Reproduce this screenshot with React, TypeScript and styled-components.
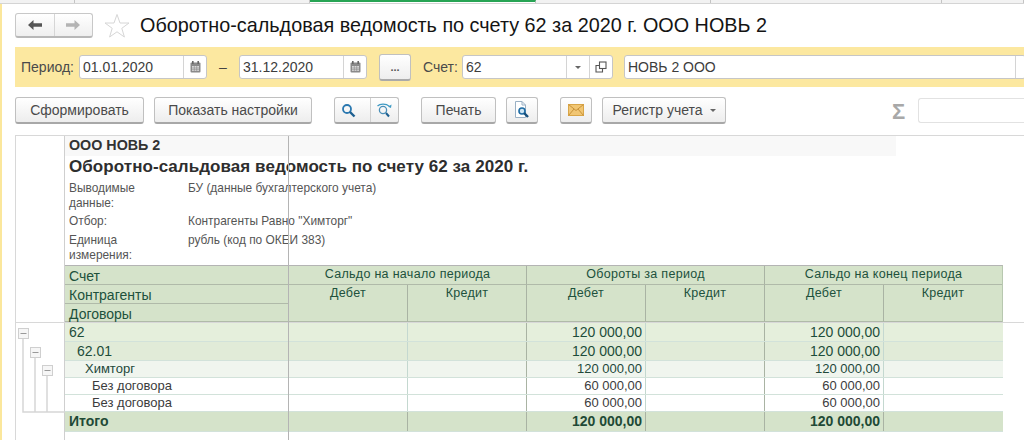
import React from "react";
import styled, { createGlobalStyle } from "styled-components";

const GlobalStyle = createGlobalStyle`
  html, body {
    margin: 0;
    padding: 0;
    height: 440px;
    overflow: hidden;
    background: #fff;
    font-family: "Liberation Sans", Arial, sans-serif;
  }
`;

const Page = styled.div`
  width: 1024px;
  height: 440px;
  overflow: hidden;
  display: flex;
  flex-direction: column;
`;

const TopStrip = styled.div`
  height: 4px;
  display: flex;
  background: #f2f2f2;
  border-bottom: 1px solid #d4d4d4;
  box-sizing: border-box;
`;

const StripCell = styled.div<{ $w: number; $active?: boolean }>`
  width: ${(p) => p.$w}px;
  flex: none;
  box-sizing: border-box;
  border-right: 1px solid #c4c4c4;
  border-top: ${(p) => (p.$active ? "2px solid #27a454" : "none")};
  background: ${(p) => (p.$active ? "#fff" : "transparent")};
`;

const Body = styled.div`
  flex: 1;
  min-height: 0;
  border-left: 2px solid #fbe79c;
  padding: 9px 0 0 13px;
  display: flex;
  flex-direction: column;
`;

const TitleRow = styled.div`
  height: 25px;
  display: flex;
  align-items: center;
`;

const NavGroup = styled.div`
  width: 78px;
  height: 25px;
  box-sizing: border-box;
  display: flex;
  border: 1px solid #c8c8c8;
  border-bottom: 2px solid #b8b8b8;
  border-radius: 3px;
  background: linear-gradient(#fff, #efefef);
`;

const NavCell = styled.div`
  flex: 1;
  display: flex;
  align-items: center;
  justify-content: center;
  & + & {
    border-left: 1px solid #d6d6d6;
  }
`;

const StarBox = styled.div`
  margin-left: 11px;
  width: 26px;
  display: flex;
  justify-content: center;
`;

const Title = styled.div`
  margin-left: 10px;
  font-size: 19.8px;
  line-height: 25px;
  color: #141414;
  white-space: nowrap;
`;

const FilterBar = styled.div`
  margin-top: 9px;
  height: 40px;
  box-sizing: border-box;
  background: #fce8a0;
  display: flex;
  align-items: center;
  padding-left: 6px;
  font-size: 14px;
  color: #4a4a4a;
`;

const FieldLabel = styled.span<{ $w: number; $ml?: number }>`
  width: ${(p) => p.$w}px;
  margin-left: ${(p) => p.$ml ?? 0}px;
  flex: none;
  white-space: nowrap;
`;

const Field = styled.div<{ $w: number; $ml?: number }>`
  width: ${(p) => p.$w}px;
  margin-left: ${(p) => p.$ml ?? 0}px;
  height: 24px;
  flex: none;
  box-sizing: border-box;
  display: flex;
  background: #fff;
  border: 1px solid #c6c6c6;
  border-radius: 3px;
`;

const FieldValue = styled.div`
  flex: 1;
  padding-left: 3px;
  line-height: 23px;
  font-size: 14px;
  color: #3c3c3c;
  white-space: nowrap;
  overflow: hidden;
`;

const FieldBtn = styled.div<{ $w: number }>`
  width: ${(p) => p.$w}px;
  flex: none;
  display: flex;
  align-items: center;
  justify-content: center;
  border-left: 1px solid #d4d4d4;
`;

const Dash = styled.span`
  width: 32px;
  flex: none;
  text-align: center;
  color: #444;
`;

const DotsButton = styled.div`
  width: 32px;
  height: 27px;
  margin-left: 12px;
  flex: none;
  box-sizing: border-box;
  display: flex;
  align-items: center;
  justify-content: center;
  border: 1px solid #c0c0c0;
  border-bottom: 2px solid #aaa;
  border-radius: 3px;
  background: linear-gradient(#fff, #eee);
  font-weight: bold;
  font-size: 11px;
  color: #555;
`;

const ActionRow = styled.div`
  margin-top: 10px;
  height: 27px;
  display: flex;
  align-items: flex-start;
`;

const Button = styled.div<{ $w: number; $ml?: number }>`
  width: ${(p) => p.$w}px;
  margin-left: ${(p) => p.$ml ?? 0}px;
  height: 27px;
  flex: none;
  box-sizing: border-box;
  display: flex;
  align-items: center;
  justify-content: center;
  gap: 7px;
  border: 1px solid #c0c0c0;
  border-bottom: 2px solid #a8a8a8;
  border-radius: 3px;
  background: linear-gradient(#fff, #ededed);
  font-size: 14px;
  color: #4a4a4a;
  white-space: nowrap;
`;

const ButtonPart = styled.div`
  flex: 1;
  align-self: stretch;
  display: flex;
  align-items: center;
  justify-content: center;
  & + & {
    border-left: 1px solid #d0d0d0;
  }
`;

const Caret = styled.span`
  width: 0;
  height: 0;
  border-left: 3px solid transparent;
  border-right: 3px solid transparent;
  border-top: 3px solid #666;
`;

const Sigma = styled.div`
  margin-left: 166px;
  width: 26px;
  font-size: 22px;
  font-weight: bold;
  line-height: 29px;
  color: #a8a8a8;
`;

const SearchBox = styled.div`
  flex: 1;
  height: 25px;
  margin-top: 1px;
  box-sizing: border-box;
  border: 1px solid #e2e2e2;
  border-right: none;
  border-radius: 3px 0 0 3px;
`;

const ReportArea = styled.div`
  margin-top: 11px;
  flex: 1;
  min-height: 0;
  display: flex;
  border-top: 1px solid #d8d8d8;
  border-left: 1px solid #d8d8d8;
`;

const Gutter = styled.div`
  width: 49px;
  flex: none;
  border-right: 1px solid #cfcfcf;
  box-sizing: border-box;
  position: relative;
`;

const Sheet = styled.div`
  flex: 1;
  min-width: 0;
  position: relative;
`;

const ColumnLine = styled.div`
  position: absolute;
  left: 223px;
  top: 0;
  bottom: 0;
  width: 1px;
  background: #b4b4b4;
  z-index: 2;
`;

const CompanyRow = styled.div`
  width: 831px;
  height: 20px;
  padding-left: 4px;
  box-sizing: border-box;
  background: #f8f8f8;
  font-size: 14.3px;
  font-weight: bold;
  line-height: 19px;
  color: #333;
`;

const ReportTitle = styled.div`
  height: 25px;
  padding-left: 4px;
  font-size: 17px;
  font-weight: bold;
  line-height: 22px;
  letter-spacing: 0.06px;
  color: #2e2e2e;
  white-space: nowrap;
`;

const MetaRow = styled.div<{ $h: number }>`
  height: ${(p) => p.$h}px;
  display: flex;
  padding-left: 4px;
  font-size: 11.9px;
  line-height: 15px;
  color: #555;
`;

const MetaLabel = styled.div`
  width: 119px;
  flex: none;
  box-sizing: border-box;
  padding-right: 30px;
`;

const MetaValue = styled.div`
  white-space: nowrap;
`;

const ReportGrid = styled.div`
  width: 938px;
  display: grid;
  grid-template-columns: 223px repeat(6, 119px);
  grid-template-rows: 19px 19px 18px;
  font-size: 12.5px;
  color: #20513c;
  border-top: 1px solid #b4b4b4;
  border-right: 1px solid #b8c8b0;
  box-sizing: border-box;
`;

const HeadCell = styled.div<{ $span?: number; $rows?: number; $left?: boolean }>`
  grid-column: span ${(p) => p.$span ?? 1};
  grid-row: span ${(p) => p.$rows ?? 1};
  background: #d5e3ca;
  box-sizing: border-box;
  border-left: 1px solid #a9b3a3;
  border-bottom: 1px solid #b0baa9;
  text-align: center;
  line-height: 17px;
  letter-spacing: 0.3px;
  white-space: nowrap;
  ${(p) =>
    p.$left &&
    `
    text-align: left;
    border-left: none;
    padding-left: 4px;
    font-size: 14px;
    line-height: 20px;
    letter-spacing: 0;
  `}
`;

const DataRow = styled.div<{ $h: number; $bg: string; $size: number; $bold?: boolean; $ink: string }>`
  width: 938px;
  height: ${(p) => p.$h}px;
  box-sizing: border-box;
  display: grid;
  grid-template-columns: 223px repeat(6, 119px);
  background: ${(p) => p.$bg};
  border-bottom: 1px solid #d2e2da;
  font-size: ${(p) => p.$size}px;
  font-weight: ${(p) => (p.$bold ? "bold" : "normal")};
  color: ${(p) => p.$ink};
  line-height: ${(p) => p.$h - 1}px;
`;

const NameCell = styled.div<{ $indent: number }>`
  padding-left: ${(p) => p.$indent}px;
  white-space: nowrap;
`;

const NumCell = styled.div<{ $strong?: boolean }>`
  box-sizing: border-box;
  padding-right: 3px;
  text-align: right;
  border-left: 1px solid ${(p) => (p.$strong ? "#a9b3a3" : "#c4d8d0")};
  white-space: nowrap;
`;

const DataDivider = styled.div`
  height: 1px;
  background: #d8d8d8;
  margin-left: -50px;
  width: 1009px;
`;

const TreeSvg = styled.svg`
  position: absolute;
  left: 0;
  top: 187px;
`;

const BackArrow = () => (
  <svg width="16" height="12" viewBox="0 0 16 12">
    <path d="M1 6 L6.5 1 V4.3 H15 V7.7 H6.5 V11 Z" fill="#555" />
  </svg>
);

const ForwardArrow = () => (
  <svg width="16" height="12" viewBox="0 0 16 12">
    <path d="M15 6 L9.5 1 V4.3 H1 V7.7 H9.5 V11 Z" fill="#b4b4b4" />
  </svg>
);

const Star = () => (
  <svg width="26" height="26" viewBox="0 0 26 26">
    <path
      d="M13 1.5 L16 10 H25 L17.8 15.3 L20.4 24 L13 18.8 L5.6 24 L8.2 15.3 L1 10 H10 Z"
      fill="#fff"
      stroke="#d6d6d6"
      strokeWidth="1"
    />
  </svg>
);

const CalendarIcon = () => (
  <svg width="11" height="12" viewBox="0 0 11 12">
    <rect x="0.5" y="1.5" width="10" height="10" rx="1" fill="#8a8a8a" />
    <rect x="2" y="0" width="1.6" height="3" fill="#666" />
    <rect x="7.4" y="0" width="1.6" height="3" fill="#666" />
    <rect x="2" y="5" width="7" height="5" fill="#d8d8d8" />
    <path d="M2 7 H9 M2 8.7 H9 M4.3 5 V10 M6.7 5 V10" stroke="#888" strokeWidth="0.6" />
  </svg>
);

const CopyIcon = () => (
  <svg width="12" height="12" viewBox="0 0 12 12" fill="none" stroke="#555" strokeWidth="1.1">
    <rect x="4.5" y="1" width="6.5" height="6.5" />
    <path d="M4.5 4.5 H1 V11 H7.5 V7.5" />
  </svg>
);

const SearchIcon = () => (
  <svg width="15" height="15" viewBox="0 0 15 15" fill="none">
    <circle cx="6" cy="6" r="4" stroke="#2a78b0" strokeWidth="1.8" />
    <path d="M9 9 L13.5 13.5" stroke="#1d5f90" strokeWidth="2.4" />
  </svg>
);

const SearchAgainIcon = () => (
  <svg width="17" height="15" viewBox="0 0 17 15" fill="none">
    <circle cx="7" cy="7" r="3.6" stroke="#4a8fb8" strokeWidth="1.3" />
    <path d="M10 10 L13 13.5" stroke="#1d5f90" strokeWidth="2" />
    <path d="M1.5 3 C4 0.6 10 0.4 13.5 3.4" stroke="#3d9ac4" strokeWidth="1.2" />
    <path d="M15.5 1.5 L15 5 L12 3.8 Z" fill="#3d9ac4" />
  </svg>
);

const PreviewIcon = () => (
  <svg width="16" height="18" viewBox="0 0 16 18" fill="none">
    <path d="M1.5 0.5 H8 L11.5 4 V16.5 H1.5 Z" fill="#fff" stroke="#9ab0c4" />
    <path d="M8 0.5 V4 H11.5" stroke="#9ab0c4" />
    <circle cx="8" cy="10" r="3" fill="#cfe6f4" stroke="#1f6ca4" strokeWidth="1.6" />
    <path d="M10.2 12.2 L14 16" stroke="#164f7c" strokeWidth="2.4" />
  </svg>
);

const MailIcon = () => (
  <svg width="16" height="12" viewBox="0 0 16 12">
    <rect x="0.5" y="0.5" width="15" height="11" fill="#f1c673" stroke="#d9a648" />
    <path d="M0.5 0.5 L8 6.5 L15.5 0.5 M0.5 11.5 L6 5 M15.5 11.5 L10 5" fill="none" stroke="#c8923a" />
  </svg>
);

const rows = [
  { name: "62", indent: 4, h: 19, bg: "#e5efdc", size: 14, ink: "#1d4d3a", turn: "120 000,00" },
  { name: "62.01", indent: 12, h: 19, bg: "#e1ebd8", size: 14, ink: "#1d4d3a", turn: "120 000,00" },
  { name: "Химторг", indent: 20, h: 17, bg: "#f0f5ee", size: 13, ink: "#23483a", turn: "120 000,00" },
  { name: "Без договора", indent: 27, h: 17, bg: "#fff", size: 13, ink: "#3c3c3c", turn: "60 000,00" },
  { name: "Без договора", indent: 27, h: 17, bg: "#fff", size: 13, ink: "#3c3c3c", turn: "60 000,00" },
];

export default function App() {
  return (
    <Page>
      <GlobalStyle />
      <TopStrip>
        <StripCell $w={75} />
        <StripCell $w={235} />
        <StripCell $w={226} $active />
        <StripCell $w={175} />
        <StripCell $w={231} />
        <StripCell $w={82} />
      </TopStrip>
      <Body>
        <TitleRow>
          <NavGroup>
            <NavCell><BackArrow /></NavCell>
            <NavCell><ForwardArrow /></NavCell>
          </NavGroup>
          <StarBox><Star /></StarBox>
          <Title>Оборотно-сальдовая ведомость по счету 62 за 2020 г. ООО НОВЬ 2</Title>
        </TitleRow>

        <FilterBar>
          <FieldLabel $w={58}>Период:</FieldLabel>
          <Field $w={128}>
            <FieldValue>01.01.2020</FieldValue>
            <FieldBtn $w={22}><CalendarIcon /></FieldBtn>
          </Field>
          <Dash>–</Dash>
          <Field $w={128}>
            <FieldValue>31.12.2020</FieldValue>
            <FieldBtn $w={22}><CalendarIcon /></FieldBtn>
          </Field>
          <DotsButton>...</DotsButton>
          <FieldLabel $w={39} $ml={12}>Счет:</FieldLabel>
          <Field $w={151}>
            <FieldValue>62</FieldValue>
            <FieldBtn $w={22}><Caret /></FieldBtn>
            <FieldBtn $w={22}><CopyIcon /></FieldBtn>
          </Field>
          <Field $w={402} $ml={11}>
            <FieldValue>НОВЬ 2 ООО</FieldValue>
            <FieldBtn $w={9} />
          </Field>
        </FilterBar>

        <ActionRow>
          <Button $w={129}>Сформировать</Button>
          <Button $w={158} $ml={10}>Показать настройки</Button>
          <Button $w={65} $ml={22}>
            <ButtonPart><SearchIcon /></ButtonPart>
            <ButtonPart><SearchAgainIcon /></ButtonPart>
          </Button>
          <Button $w={75} $ml={22}>Печать</Button>
          <Button $w={32} $ml={10}><PreviewIcon /></Button>
          <Button $w={32} $ml={22}><MailIcon /></Button>
          <Button $w={124} $ml={10}>Регистр учета <Caret /></Button>
          <Sigma>Σ</Sigma>
          <SearchBox />
        </ActionRow>

        <ReportArea>
          <Gutter>
            <TreeSvg width="49" height="96" viewBox="0 0 49 96" fill="none">
              <path d="M7 15 V89 H49 M19 34 V89 M31 52 V89" stroke="#d6d6d6" strokeWidth="1.5" />
              <rect x="2.5" y="5.5" width="10" height="10" fill="#f6f6f6" stroke="#cfcfcf" />
              <path d="M4.5 10.5 H10.5" stroke="#999" />
              <rect x="14.5" y="24.5" width="10" height="10" fill="#f6f6f6" stroke="#cfcfcf" />
              <path d="M16.5 29.5 H22.5" stroke="#999" />
              <rect x="26.5" y="42.5" width="10" height="10" fill="#f6f6f6" stroke="#cfcfcf" />
              <path d="M28.5 47.5 H34.5" stroke="#999" />
            </TreeSvg>
          </Gutter>
          <Sheet>
            <ColumnLine />
            <CompanyRow>ООО НОВЬ 2</CompanyRow>
            <ReportTitle>Оборотно-сальдовая ведомость по счету 62 за 2020 г.</ReportTitle>
            <MetaRow $h={33}>
              <MetaLabel>Выводимые данные:</MetaLabel>
              <MetaValue>БУ (данные бухгалтерского учета)</MetaValue>
            </MetaRow>
            <MetaRow $h={19}>
              <MetaLabel>Отбор:</MetaLabel>
              <MetaValue>Контрагенты Равно "Химторг"</MetaValue>
            </MetaRow>
            <MetaRow $h={32}>
              <MetaLabel>Единица измерения:</MetaLabel>
              <MetaValue>рубль (код по ОКЕИ 383)</MetaValue>
            </MetaRow>

            <ReportGrid>
              <HeadCell $left>Счет</HeadCell>
              <HeadCell $span={2}>Сальдо на начало периода</HeadCell>
              <HeadCell $span={2}>Обороты за период</HeadCell>
              <HeadCell $span={2}>Сальдо на конец периода</HeadCell>
              <HeadCell $left>Контрагенты</HeadCell>
              <HeadCell $rows={2}>Дебет</HeadCell>
              <HeadCell $rows={2}>Кредит</HeadCell>
              <HeadCell $rows={2}>Дебет</HeadCell>
              <HeadCell $rows={2}>Кредит</HeadCell>
              <HeadCell $rows={2}>Дебет</HeadCell>
              <HeadCell $rows={2}>Кредит</HeadCell>
              <HeadCell $left>Договоры</HeadCell>
            </ReportGrid>
            <DataDivider />

            {rows.map((r, i) => (
              <DataRow key={i} $h={r.h} $bg={r.bg} $size={r.size} $ink={r.ink}>
                <NameCell $indent={r.indent}>{r.name}</NameCell>
                <NumCell $strong />
                <NumCell />
                <NumCell $strong>{r.turn}</NumCell>
                <NumCell />
                <NumCell $strong>{r.turn}</NumCell>
                <NumCell />
              </DataRow>
            ))}
            <DataRow $h={20} $bg="#d5e3ca" $size={14} $bold $ink="#1f4a36">
              <NameCell $indent={4}>Итого</NameCell>
              <NumCell $strong />
              <NumCell $strong />
              <NumCell $strong>120 000,00</NumCell>
              <NumCell $strong />
              <NumCell $strong>120 000,00</NumCell>
              <NumCell $strong />
            </DataRow>
          </Sheet>
        </ReportArea>
      </Body>
    </Page>
  );
}
